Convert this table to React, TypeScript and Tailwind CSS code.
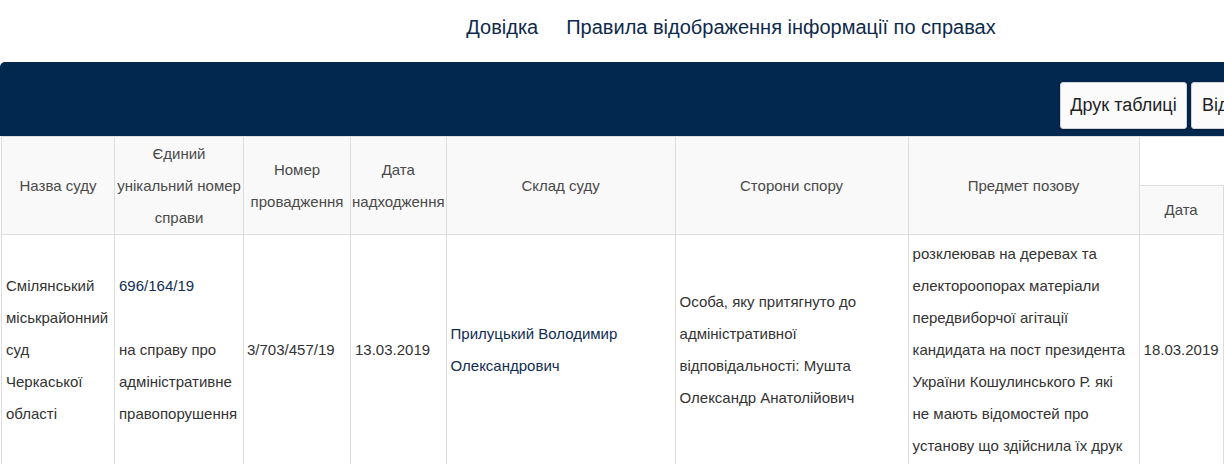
const font = { fontFamily: '"Liberation Sans", Arial, sans-serif' }

const headCols = [
  { w: "w-[113px]", lines: ["Назва суду"] },
  { w: "w-[129px]", lines: ["Єдиний", "унікальний номер", "справи"] },
  { w: "w-[107px]", lines: ["Номер", "провадження"] },
  { w: "w-[95px]", lines: ["Дата", "надходження"] },
  { w: "w-[229px]", lines: ["Склад суду"] },
  { w: "w-[233px]", lines: ["Сторони спору"] },
  { w: "w-[231px]", lines: ["Предмет позову"] },
]

function Lines({ lines }: { lines: string[] }) {
  return (
    <>
      {lines.map((line, i) => (
        <span className="block whitespace-nowrap" key={i}>
          {line || "\u00a0"}
        </span>
      ))}
    </>
  )
}

function App() {
  return (
    <div className="h-[464px] w-[1224px] overflow-hidden bg-white" style={font}>
      <div className="w-[1462px]">
        <nav className="flex h-[62px] items-center justify-center gap-[28px] pb-[8px] text-[20px] text-[#0e2a4b]">
          <a>Довідка</a>
          <a>Правила відображення інформації по справах</a>
        </nav>

        <div className="flex h-[74px] items-start justify-end gap-[4px] rounded-tl-[5px] bg-[#032850] pr-[30px] pt-[20px]">
          <button className="h-[47px] w-[127px] rounded-[3px] border border-[#cfd3d8] bg-[#fbfbfb] text-[18px] text-[#1f1f1f] shadow-[0_1px_3px_rgba(0,0,0,0.35)]">
            Друк таблиці
          </button>
          <button className="h-[47px] w-[241px] rounded-[3px] border border-[#cfd3d8] bg-[#fbfbfb] pl-[10px] text-left text-[18px] text-[#1f1f1f] shadow-[0_1px_3px_rgba(0,0,0,0.35)]">
            Відображення колонок
          </button>
        </div>

        <table className="ml-[1px] table-fixed border-collapse text-[15px] leading-[32px]">
          <colgroup>
            {headCols.map((c, i) => (
              <col className={c.w} key={i} />
            ))}
            <col className="w-[84px]" />
            <col className="w-[160px]" />
          </colgroup>
          <thead>
            <tr className="h-[49px]">
              {headCols.map((c, i) => (
                <th
                  className="border border-[#dddddd] bg-[#f9f9f9] px-[1px] text-center align-middle font-normal text-[#4a4a4a]"
                  key={i}
                  rowSpan={2}
                >
                  <Lines lines={c.lines} />
                </th>
              ))}
              <th className="border border-[#dddddd] bg-white" colSpan={2}></th>
            </tr>
            <tr className="h-[49px]">
              <th className="border border-[#dddddd] bg-[#f9f9f9] font-normal text-[#4a4a4a]">Дата</th>
              <th className="border border-[#dddddd] bg-[#f9f9f9]"></th>
            </tr>
          </thead>
          <tbody className="text-[#333333]">
            <tr>
              <td className="border border-[#dddddd] px-[4px] py-[3px] align-middle">
                <Lines lines={["Смілянський", "міськрайонний", "суд", "Черкаської", "області"]} />
              </td>
              <td className="border border-[#dddddd] px-[4px] py-[3px] align-middle">
                <a className="block text-[#0f2d52]">696/164/19</a>
                <Lines lines={["", "на справу про", "адміністративне", "правопорушення"]} />
              </td>
              <td className="border border-[#dddddd] px-[3px] py-[3px] align-middle">3/703/457/19</td>
              <td className="border border-[#dddddd] px-[4px] py-[3px] align-middle">13.03.2019</td>
              <td className="border border-[#dddddd] px-[4px] py-[3px] align-middle text-[#0f2d52]">
                <Lines lines={["Прилуцький Володимир", "Олександрович"]} />
              </td>
              <td className="border border-[#dddddd] px-[4px] py-[3px] align-middle">
                <Lines
                  lines={[
                    "Особа, яку притягнуто до",
                    "адміністративної",
                    "відповідальності: Мушта",
                    "Олександр Анатолійович",
                  ]}
                />
              </td>
              <td className="border border-[#dddddd] px-[4px] py-[3px] align-middle">
                <Lines
                  lines={[
                    "розклеював на деревах та",
                    "електороопорах матеріали",
                    "передвиборчої агітації",
                    "кандидата на пост президента",
                    "України Кошулинського Р. які",
                    "не мають відомостей про",
                    "установу що здійснила їх друк",
                  ]}
                />
              </td>
              <td className="border border-[#dddddd] px-[4px] py-[3px] align-middle">18.03.2019</td>
              <td className="border border-[#dddddd] px-[4px] py-[3px] align-middle"></td>
            </tr>
          </tbody>
        </table>
      </div>
    </div>
  )
}

export default App
